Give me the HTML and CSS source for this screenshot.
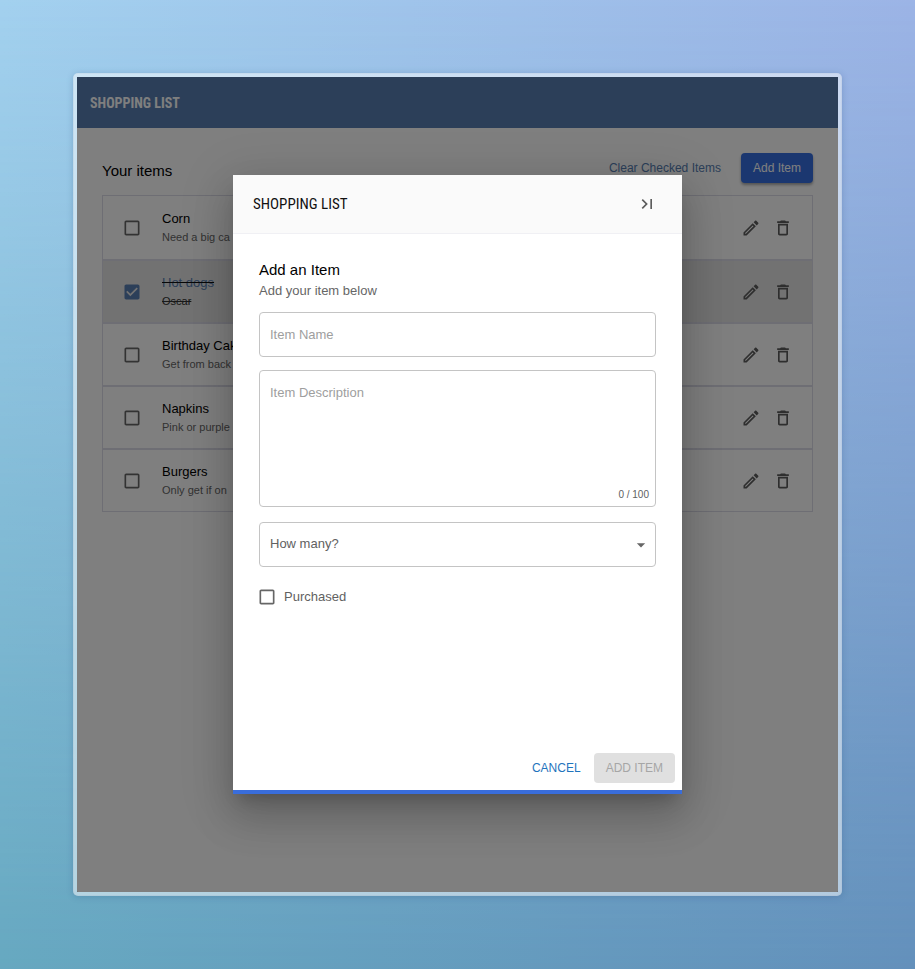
FILE: index.html
```html
<!DOCTYPE html>
<html lang="en">
<head>
<meta charset="utf-8">
<meta name="viewport" content="width=device-width, initial-scale=1">
<title>Shopping List</title>
<link rel="stylesheet" href="styles.css">
</head>
<body>
<svg width="0" height="0" class="sprite" aria-hidden="true">
  <symbol id="edit" viewBox="0 0 24 24"><path d="m14.06 9.02.92.92L5.92 19H5v-.92zM17.66 3c-.25 0-.51.1-.7.29l-1.83 1.83 3.75 3.75 1.83-1.83c.39-.39.39-1.02 0-1.41l-2.34-2.34c-.2-.2-.45-.29-.71-.29m-3.6 3.19L3 17.25V21h3.75L17.81 9.94z"/></symbol>
  <symbol id="trash" viewBox="0 0 24 24"><path d="M6 19c0 1.1.9 2 2 2h8c1.1 0 2-.9 2-2V7H6zM8 9h8v10H8zm7.5-5-1-1h-5l-1 1H5v2h14V4z"/></symbol>
  <symbol id="box" viewBox="0 0 24 24"><path d="M19 5v14H5V5h14m0-2H5c-1.1 0-2 .9-2 2v14c0 1.1.9 2 2 2h14c1.1 0 2-.9 2-2V5c0-1.1-.9-2-2-2z"/></symbol>
  <symbol id="box-checked" viewBox="0 0 24 24"><path d="M19 3H5c-1.11 0-2 .9-2 2v14c0 1.1.89 2 2 2h14c1.11 0 2-.9 2-2V5c0-1.1-.89-2-2-2zm-9 14l-5-5 1.41-1.41L10 14.17l7.59-7.59L19 8l-9 9z"/></symbol>
</svg>
<div class="window">
  <header class="appbar">SHOPPING LIST</header>
  <main class="page">
    <div class="toolbar">
      <h2 class="heading">Your items</h2>
      <div class="toolbar-actions">
        <button type="button" class="btn btn-link">Clear Checked Items</button>
        <button type="button" class="btn btn-primary">Add Item</button>
      </div>
    </div>
    <ul class="items">
      <li class="item">
        <span class="check"><input type="checkbox" id="i1"><svg class="icon"><use href="#box"/></svg></span>
        <label class="item-text" for="i1"><span class="item-name">Corn</span><span class="item-note">Need a big ca</span></label>
        <button type="button" class="icon-btn" aria-label="Edit"><svg class="icon"><use href="#edit"/></svg></button>
        <button type="button" class="icon-btn" aria-label="Delete"><svg class="icon"><use href="#trash"/></svg></button>
      </li>
      <li class="item item-done">
        <span class="check"><input type="checkbox" id="i2" checked><svg class="icon"><use href="#box-checked"/></svg></span>
        <label class="item-text" for="i2"><span class="item-name">Hot dogs</span><span class="item-note">Oscar</span></label>
        <button type="button" class="icon-btn" aria-label="Edit"><svg class="icon"><use href="#edit"/></svg></button>
        <button type="button" class="icon-btn" aria-label="Delete"><svg class="icon"><use href="#trash"/></svg></button>
      </li>
      <li class="item">
        <span class="check"><input type="checkbox" id="i3"><svg class="icon"><use href="#box"/></svg></span>
        <label class="item-text" for="i3"><span class="item-name">Birthday Cake</span><span class="item-note">Get from back</span></label>
        <button type="button" class="icon-btn" aria-label="Edit"><svg class="icon"><use href="#edit"/></svg></button>
        <button type="button" class="icon-btn" aria-label="Delete"><svg class="icon"><use href="#trash"/></svg></button>
      </li>
      <li class="item">
        <span class="check"><input type="checkbox" id="i4"><svg class="icon"><use href="#box"/></svg></span>
        <label class="item-text" for="i4"><span class="item-name">Napkins</span><span class="item-note">Pink or purple</span></label>
        <button type="button" class="icon-btn" aria-label="Edit"><svg class="icon"><use href="#edit"/></svg></button>
        <button type="button" class="icon-btn" aria-label="Delete"><svg class="icon"><use href="#trash"/></svg></button>
      </li>
      <li class="item">
        <span class="check"><input type="checkbox" id="i5"><svg class="icon"><use href="#box"/></svg></span>
        <label class="item-text" for="i5"><span class="item-name">Burgers</span><span class="item-note">Only get if on</span></label>
        <button type="button" class="icon-btn" aria-label="Edit"><svg class="icon"><use href="#edit"/></svg></button>
        <button type="button" class="icon-btn" aria-label="Delete"><svg class="icon"><use href="#trash"/></svg></button>
      </li>
    </ul>
  </main>
  <div class="backdrop">
    <form class="dialog" role="dialog" aria-modal="true" aria-labelledby="dialog-title">
      <header class="dialog-head">
        <h1 class="dialog-title" id="dialog-title">SHOPPING LIST</h1>
        <button type="button" class="icon-btn" aria-label="Close"><svg class="icon" viewBox="0 0 24 24"><path d="M5.59 7.41L10.18 12l-4.59 4.59L7 18l6-6-6-6zM16 6h2v12h-2z"/></svg></button>
      </header>
      <div class="dialog-body">
        <h2 class="heading">Add an Item</h2>
        <p class="hint">Add your item below</p>
        <input class="field" type="text" placeholder="Item Name" aria-label="Item Name">
        <div class="stack">
          <textarea class="field field-area" placeholder="Item Description" aria-label="Item Description"></textarea>
          <span class="counter">0 / 100</span>
        </div>
        <div class="stack">
          <select class="field field-select" aria-label="How many?"><option>How many?</option><option>1</option><option>2</option><option>3</option></select>
          <svg class="icon arrow" viewBox="0 0 24 24"><path d="M7 10l5 5 5-5z"/></svg>
        </div>
        <label class="purchased"><span class="check"><input type="checkbox"><svg class="icon"><use href="#box"/></svg></span>Purchased</label>
      </div>
      <footer class="dialog-foot">
        <button type="button" class="btn btn-text">CANCEL</button>
        <button type="submit" class="btn btn-disabled" disabled>ADD ITEM</button>
      </footer>
    </form>
  </div>
</div>
</body>
</html>
```
FILE: styles.css
```css
* { box-sizing: border-box; }

body {
  position: relative;
  display: flex;
  min-height: 100vh;
  margin: 0;
  padding: 73px;
  font: 13px/18px "Liberation Sans", Arial, sans-serif;
  color: #1c1c1c;
  background: linear-gradient(90deg, #a3d1ef, #9cb4e6);
}

/* lower colours fade in over the upper ones */
body::before {
  content: "";
  position: absolute;
  inset: 0;
  background: linear-gradient(90deg, #66a8c0, #6390bb);
  mask-image: linear-gradient(transparent, #000);
}

.sprite { position: absolute; }

h1, h2, p, ul { margin: 0; padding: 0; }

button, input, select, textarea { font: inherit; }

.window {
  position: relative;
  flex: 1;
  border: 4px solid rgba(255, 255, 255, 0.5);
  border-radius: 5px;
  background: #fff padding-box;
  box-shadow: 0 1px 6px rgba(40, 80, 130, 0.25);
}

.appbar {
  display: flex;
  align-items: center;
  height: 51px;
  padding: 0 13px;
  background: #587eb2;
  color: #fff;
  font: bold 14px/20px "Liberation Sans Narrow", "Roboto Condensed", Roboto, sans-serif;
}

.page { padding: 25px; }

.toolbar {
  display: flex;
  align-items: center;
  justify-content: space-between;
  padding-bottom: 12px;
}

.toolbar-actions { display: flex; gap: 8px; }

.heading {
  font-size: 15px;
  font-weight: 400;
  line-height: 22px;
  color: #000;
}

.toolbar .heading { padding-top: 6px; }

.btn {
  height: 30px;
  padding: 0 12px;
  border: 0;
  border-radius: 4px;
  background: none;
  font-size: 12px;
  white-space: nowrap;
}

.btn-link { color: #587eb2; }

.btn-primary {
  background: #376fe0;
  color: #fff;
  box-shadow: 0 2px 3px rgba(0, 0, 0, 0.35);
}

.btn-text { color: #1f74bd; }

.btn-disabled { background: #e0e0e0; color: #a6a6a6; }

.items {
  list-style: none;
  border: 1px solid #dcdde8;
}

.item {
  display: flex;
  align-items: center;
  height: 63px;
  padding: 0 19px;
}

.item + .item { border-top: 2px solid #dcdde8; }

.item-done { background: #e4e4e4; }

.item-text {
  display: flex;
  flex: 1;
  flex-direction: column;
  padding-left: 20px;
}

.item-name { color: #000; }

.item-note { font-size: 11px; color: #666; }

.item-done .check { color: #587eb2; }

.item-done .item-name {
  color: #587eb2;
  text-decoration: line-through #111;
}

.item-done .item-note { color: #333; text-decoration: line-through; }

.icon {
  display: block;
  width: 20px;
  height: 20px;
  fill: currentColor;
}

.icon-btn {
  padding: 0 0 0 12px;
  border: 0;
  background: none;
  color: #5c5c5c;
}

.check {
  display: grid;
  color: #666;
}

.check input, .check svg { grid-area: 1 / 1; }

.check input {
  width: 20px;
  height: 20px;
  margin: 0;
  opacity: 0;
}

.backdrop {
  position: absolute;
  inset: 0;
  display: flex;
  align-items: center;
  justify-content: center;
  background: rgba(0, 0, 0, 0.5);
}

.dialog {
  display: flex;
  flex-direction: column;
  width: 59%;
  min-height: 76%;
  border-bottom: 4px solid #396ddb;
  background: #fff;
  box-shadow: 0 11px 15px -7px rgba(0, 0, 0, 0.2), 0 24px 38px 3px rgba(0, 0, 0, 0.14), 0 9px 46px 8px rgba(0, 0, 0, 0.12);
}

.dialog-head {
  display: flex;
  align-items: center;
  justify-content: space-between;
  height: 59px;
  padding: 0 25px 0 20px;
  border-bottom: 1px solid #f0f0f4;
  background: #fafafa;
}

.dialog-title {
  font: 15px/20px "Liberation Sans Narrow", "Roboto Condensed", Roboto, sans-serif;
  color: #111;
}

.dialog-body {
  display: flex;
  flex: 1;
  flex-direction: column;
  padding: 25px 26px;
}

.hint { line-height: 20px; color: #666; }

.field {
  width: 100%;
  height: 45px;
  padding: 0 10px;
  border: 1px solid #c4c4c4;
  border-radius: 4px;
  background: #fff;
  color: #616161;
}

.field::placeholder { color: #9e9e9e; opacity: 1; }

.hint + .field { margin: 11px 0 13px; }

.field-area {
  display: block;
  height: 137px;
  padding: 13px 10px;
  resize: none;
}

.stack { position: relative; margin-bottom: 15px; }

.counter {
  position: absolute;
  right: 7px;
  bottom: 3px;
  font-size: 10px;
  color: #616161;
}

.field-select { appearance: none; display: block; }

.arrow {
  position: absolute;
  top: 13px;
  right: 5px;
  color: #666;
  pointer-events: none;
}

.purchased {
  display: flex;
  align-items: center;
  gap: 7px;
  margin-top: 5px;
  margin-left: -2px;
  color: #616161;
}

.dialog-foot {
  display: flex;
  justify-content: flex-end;
  gap: 1px;
  padding: 7px;
}
```
